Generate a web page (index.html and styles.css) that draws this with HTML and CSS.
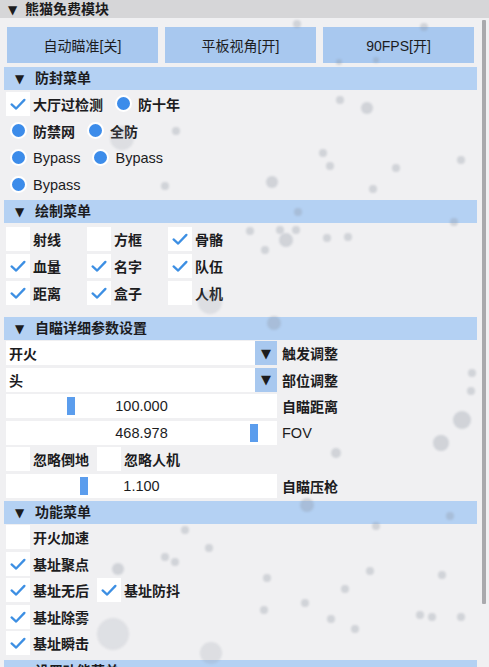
FILE: index.html
```html
<!DOCTYPE html>
<html lang="zh">
<head>
<meta charset="utf-8">
<title>熊猫免费模块</title>
<link rel="stylesheet" href="styles.css">
</head>
<body>
<div class="titlebar"><span class="tri">▼</span>熊猫免费模块</div>
<div class="window">
  <div class="content">
    <div class="btnrow">
      <div class="btn">自动瞄准[关]</div>
      <div class="btn">平板视角[开]</div>
      <div class="btn">90FPS[开]</div>
    </div>

    <div class="hdr first"><span class="tri">▼</span>防封菜单</div>
    <div class="sec s1">
      <div class="row">
        <span class="item"><span class="cb"><svg viewBox="0 0 24 24"><polyline points="5,12.5 10,17 19,7.5"/></svg></span><span class="lbl">大厅过检测</span></span>
        <span class="item"><span class="rb"><i></i></span><span class="lbl">防十年</span></span>
      </div>
      <div class="row">
        <span class="item"><span class="rb"><i></i></span><span class="lbl">防禁网</span></span>
        <span class="item"><span class="rb"><i></i></span><span class="lbl">全防</span></span>
      </div>
      <div class="row">
        <span class="item"><span class="rb"><i></i></span><span class="lbl lat">Bypass</span></span>
        <span class="item"><span class="rb"><i></i></span><span class="lbl lat">Bypass</span></span>
      </div>
      <div class="row">
        <span class="item"><span class="rb"><i></i></span><span class="lbl lat">Bypass</span></span>
      </div>
    </div>

    <div class="hdr"><span class="tri">▼</span>绘制菜单</div>
    <div class="sec grid">
      <span class="item"><span class="cb"></span><span class="lbl">射线</span></span>
      <span class="item"><span class="cb"></span><span class="lbl">方框</span></span>
      <span class="item"><span class="cb"><svg viewBox="0 0 24 24"><polyline points="5,12.5 10,17 19,7.5"/></svg></span><span class="lbl">骨骼</span></span>
      <span class="item"><span class="cb"><svg viewBox="0 0 24 24"><polyline points="5,12.5 10,17 19,7.5"/></svg></span><span class="lbl">血量</span></span>
      <span class="item"><span class="cb"><svg viewBox="0 0 24 24"><polyline points="5,12.5 10,17 19,7.5"/></svg></span><span class="lbl">名字</span></span>
      <span class="item"><span class="cb"><svg viewBox="0 0 24 24"><polyline points="5,12.5 10,17 19,7.5"/></svg></span><span class="lbl">队伍</span></span>
      <span class="item"><span class="cb"><svg viewBox="0 0 24 24"><polyline points="5,12.5 10,17 19,7.5"/></svg></span><span class="lbl">距离</span></span>
      <span class="item"><span class="cb"><svg viewBox="0 0 24 24"><polyline points="5,12.5 10,17 19,7.5"/></svg></span><span class="lbl">盒子</span></span>
      <span class="item"><span class="cb"></span><span class="lbl">人机</span></span>
    </div>

    <div class="hdr h3"><span class="tri">▼</span>自瞄详细参数设置</div>
    <div class="sec s3">
      <div class="row">
        <span class="field">开火</span><span class="drop">▼</span><span class="flbl">触发调整</span>
      </div>
      <div class="row">
        <span class="field">头</span><span class="drop">▼</span><span class="flbl">部位调整</span>
      </div>
      <div class="row">
        <span class="slider"><span class="handle" style="left:61px"></span><span class="val">100.000</span></span><span class="flbl">自瞄距离</span>
      </div>
      <div class="row">
        <span class="slider"><span class="handle" style="left:244px"></span><span class="val">468.978</span></span><span class="flbl lat">FOV</span>
      </div>
      <div class="row">
        <span class="item"><span class="cb"></span><span class="lbl">忽略倒地</span></span>
        <span class="item"><span class="cb"></span><span class="lbl">忽略人机</span></span>
      </div>
      <div class="row">
        <span class="slider"><span class="handle" style="left:74px"></span><span class="val">1.100</span></span><span class="flbl">自瞄压枪</span>
      </div>
    </div>

    <div class="hdr"><span class="tri">▼</span>功能菜单</div>
    <div class="sec s4">
      <div class="row">
        <span class="item"><span class="cb"></span><span class="lbl">开火加速</span></span>
      </div>
      <div class="row">
        <span class="item"><span class="cb"><svg viewBox="0 0 24 24"><polyline points="5,12.5 10,17 19,7.5"/></svg></span><span class="lbl">基址聚点</span></span>
      </div>
      <div class="row">
        <span class="item"><span class="cb"><svg viewBox="0 0 24 24"><polyline points="5,12.5 10,17 19,7.5"/></svg></span><span class="lbl">基址无后</span></span>
        <span class="item"><span class="cb"><svg viewBox="0 0 24 24"><polyline points="5,12.5 10,17 19,7.5"/></svg></span><span class="lbl">基址防抖</span></span>
      </div>
      <div class="row">
        <span class="item"><span class="cb"><svg viewBox="0 0 24 24"><polyline points="5,12.5 10,17 19,7.5"/></svg></span><span class="lbl">基址除雾</span></span>
      </div>
      <div class="row">
        <span class="item"><span class="cb"><svg viewBox="0 0 24 24"><polyline points="5,12.5 10,17 19,7.5"/></svg></span><span class="lbl">基址瞬击</span></span>
      </div>
    </div>

    <div class="hdr h5"><span class="tri">▼</span>设置功能菜单</div>
  </div>
  <div class="scroll"></div>
</div>

<svg class="bubbles" viewBox="0 0 489 667" aria-hidden="true">
  <defs><filter id="soft"><feGaussianBlur stdDeviation="0.8"/></filter></defs>
  <g filter="url(#soft)" fill="#8d95a2">
    <circle cx="297" cy="24" r="4"/>
    <circle cx="424" cy="27" r="4"/>
    <circle cx="376" cy="60" r="3"/>
    <circle cx="339" cy="62" r="3"/>
    <circle cx="340" cy="100" r="4"/>
    <circle cx="367" cy="108" r="6"/>
    <circle cx="122" cy="138" r="12" opacity="0.6"/>
    <circle cx="176" cy="131" r="4"/>
    <circle cx="323" cy="153" r="4"/>
    <circle cx="330" cy="166" r="4"/>
    <circle cx="396" cy="168" r="4"/>
    <circle cx="461" cy="160" r="4"/>
    <circle cx="272" cy="182" r="6"/>
    <circle cx="373" cy="189" r="4"/>
    <circle cx="165" cy="186" r="4"/>
    <circle cx="298" cy="212" r="4"/>
    <circle cx="454" cy="222" r="4"/>
    <circle cx="250" cy="231" r="4"/>
    <circle cx="280" cy="230" r="4"/>
    <circle cx="296" cy="230" r="4"/>
    <circle cx="286" cy="240" r="7"/>
    <circle cx="327" cy="238" r="4"/>
    <circle cx="348" cy="237" r="4"/>
    <circle cx="265" cy="250" r="4"/>
    <circle cx="210" cy="302" r="12" opacity="0.6"/>
    <circle cx="274" cy="323" r="7"/>
    <circle cx="472" cy="373" r="4"/>
    <circle cx="471" cy="391" r="4"/>
    <circle cx="462" cy="420" r="9"/>
    <circle cx="441" cy="443" r="8"/>
    <circle cx="336" cy="453" r="5"/>
    <circle cx="307" cy="505" r="7"/>
    <circle cx="450" cy="516" r="4"/>
    <circle cx="376" cy="526" r="4"/>
    <circle cx="185" cy="530" r="4"/>
    <circle cx="209" cy="548" r="4"/>
    <circle cx="165" cy="557" r="4"/>
    <circle cx="175" cy="562" r="4"/>
    <circle cx="118" cy="569" r="6"/>
    <circle cx="370" cy="571" r="4"/>
    <circle cx="442" cy="575" r="4"/>
    <circle cx="267" cy="578" r="4"/>
    <circle cx="345" cy="589" r="4"/>
    <circle cx="305" cy="603" r="4"/>
    <circle cx="420" cy="615" r="4"/>
    <circle cx="264" cy="610" r="4"/>
    <circle cx="331" cy="619" r="4"/>
    <circle cx="432" cy="617" r="4"/>
    <circle cx="461" cy="617" r="4"/>
    <circle cx="355" cy="629" r="4"/>
    <circle cx="113" cy="634" r="16" opacity="0.55"/>
    <circle cx="211" cy="653" r="11" opacity="0.6"/>
  </g>
</svg>
</body>
</html>
```

FILE: styles.css
```css
* { box-sizing: border-box; }

html, body {
  margin: 0;
  padding: 0;
  width: 489px;
  height: 667px;
  overflow: hidden;
}

body {
  background: #f0f0f2;
  color: #1c1c1e;
  font-family: "Liberation Sans", "Noto Sans CJK SC", sans-serif;
  font-size: 14px;
  position: relative;
}

.tri {
  font-family: "DejaVu Sans", sans-serif;
  font-size: 12px;
  display: inline-block;
  width: 13px;
  margin-right: 9px;
  text-align: center;
}

.titlebar {
  height: 18px;
  line-height: 18px;
  background: #d6d6d8;
  padding-left: 6px;
  font-weight: bold;
  font-size: 14px;
}
.titlebar .tri { margin-right: 6px; }

.window {
  display: flex;
  align-items: flex-start;
}

.content {
  margin-left: 4px;
  width: 473px;
}

.scroll {
  margin-left: 5px;
  margin-top: 2px;
  width: 4px;
  height: 584px;
  background: #a9a9ad;
  border-radius: 1px;
}

.btnrow {
  margin-top: 9px;
  padding: 0 3px;
  display: grid;
  grid-template-columns: repeat(3, 1fr);
  gap: 7px;
}

.btn {
  height: 36px;
  background: #a8c8ef;
  display: flex;
  align-items: center;
  justify-content: center;
  font-size: 14px;
}

.hdr {
  height: 23px;
  line-height: 23px;
  background: #b4d1f3;
  padding-left: 9px;
  font-weight: bold;
  margin-top: 2px;
}
.hdr.first { margin-top: 4px; }
.hdr.h3 { margin-top: 11px; }
.hdr.h5 { margin-top: 3px; }

.sec { padding-left: 2px; }

.row {
  height: 27px;
  display: flex;
  align-items: center;
  gap: 8px;
}
.s3 .row, .s4 .row { height: 26.5px; }

.item {
  display: flex;
  align-items: center;
  gap: 3px;
}

.lbl { font-weight: bold; }
.lat { font-weight: normal; font-size: 14.5px; }

.cb {
  width: 24px;
  height: 24px;
  background: #ffffff;
  display: flex;
  align-items: center;
  justify-content: center;
}
.cb svg {
  width: 22px;
  height: 22px;
  fill: none;
  stroke: #3d8fe3;
  stroke-width: 2.5;
  stroke-linecap: round;
  stroke-linejoin: round;
}

.rb {
  width: 24px;
  height: 24px;
  display: flex;
  align-items: center;
  justify-content: center;
}
.rb i {
  width: 17px;
  height: 17px;
  border-radius: 50%;
  background: #3c8cea;
  border: 2px solid #ffffff;
}

.grid {
  display: grid;
  grid-template-columns: 81px 81px 81px;
  grid-auto-rows: 27px;
  align-items: center;
  margin-top: 2px;
}

.s3 .row { gap: 0; }

.field {
  width: 249px;
  height: 24px;
  background: #ffffff;
  display: flex;
  align-items: center;
  padding-left: 3px;
  font-weight: bold;
}

.drop {
  width: 22px;
  height: 24px;
  background: #a8c8ef;
  display: flex;
  align-items: center;
  justify-content: center;
  font-family: "DejaVu Sans", sans-serif;
  font-size: 13px;
}

.flbl {
  margin-left: 5px;
  font-weight: bold;
}
.flbl.lat { font-weight: normal; }

.slider {
  position: relative;
  width: 271px;
  height: 24px;
  background: #ffffff;
  display: flex;
  align-items: center;
  justify-content: center;
}
.handle {
  position: absolute;
  top: 3px;
  width: 8px;
  height: 18px;
  background: #5b9ded;
}
.val { position: relative; font-size: 14.5px; }

.s3 .row .item + .item { margin-left: 8px; }

.bubbles {
  position: absolute;
  left: 0;
  top: 0;
  width: 489px;
  height: 667px;
  pointer-events: none;
  opacity: 0.32;
}
```
